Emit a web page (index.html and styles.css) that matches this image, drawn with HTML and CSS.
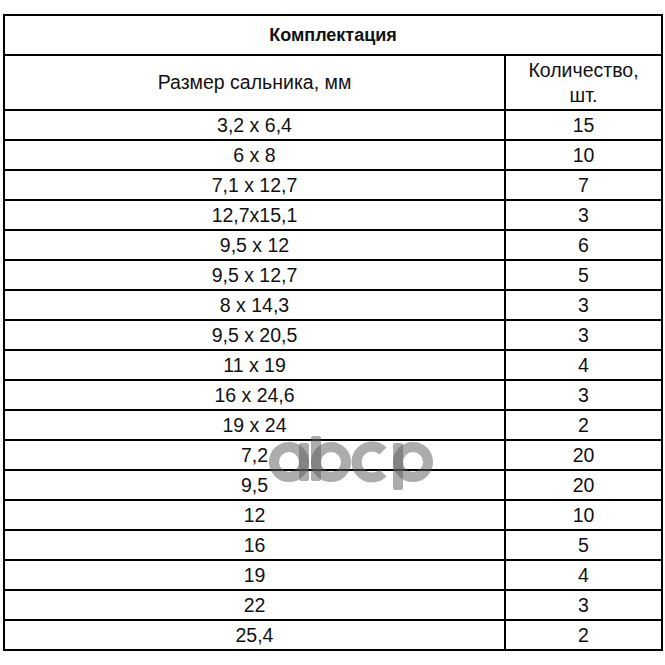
FILE: index.html
```html
<!DOCTYPE html>
<html lang="ru">
<head>
<meta charset="utf-8">
<link rel="stylesheet" href="styles.css">
</head>
<body>
<div class="sheet">
  <table class="kit">
    <colgroup><col class="c1"><col class="c2"></colgroup>
    <tr class="title"><td colspan="2">Комплектация</td></tr>
    <tr class="head"><td>Размер сальника, мм</td><td>Количество,<br>шт.</td></tr>
    <tr><td>3,2 x 6,4</td><td>15</td></tr>
    <tr><td>6 x 8</td><td>10</td></tr>
    <tr><td>7,1 x 12,7</td><td>7</td></tr>
    <tr><td>12,7x15,1</td><td>3</td></tr>
    <tr><td>9,5 x 12</td><td>6</td></tr>
    <tr><td>9,5 x 12,7</td><td>5</td></tr>
    <tr><td>8 x 14,3</td><td>3</td></tr>
    <tr><td>9,5 x 20,5</td><td>3</td></tr>
    <tr><td>11 x 19</td><td>4</td></tr>
    <tr><td>16 x 24,6</td><td>3</td></tr>
    <tr><td>19 x 24</td><td>2</td></tr>
    <tr><td>7,2</td><td>20</td></tr>
    <tr><td>9,5</td><td>20</td></tr>
    <tr><td>12</td><td>10</td></tr>
    <tr><td>16</td><td>5</td></tr>
    <tr><td>19</td><td>4</td></tr>
    <tr><td>22</td><td>3</td></tr>
    <tr><td>25,4</td><td>2</td></tr>
  </table>
  <svg class="mark" width="166" height="58" viewBox="0 0 166 58">
    <g fill="none" stroke="currentColor" stroke-width="10">
      <circle cx="21" cy="28" r="15"/>
      <circle cx="63" cy="28" r="15"/>
      <path d="M115 17 A15.5 15.5 0 1 0 115 39"/>
      <circle cx="145" cy="28" r="15"/>
    </g>
    <g fill="currentColor">
      <rect x="31" y="9" width="10" height="38" rx="2"/>
      <rect x="43" y="2" width="10" height="45" rx="2"/>
      <rect x="125" y="9" width="10" height="47" rx="2"/>
    </g>
  </svg>
</div>
</body>
</html>
```
FILE: styles.css
```css
html, body {
  margin: 0;
  padding: 0;
  background: #fff;
}
.sheet {
  position: relative;
  padding: 14px 0 0 3px;
}
.kit {
  border-collapse: collapse;
  width: 658px;
  font-family: "Liberation Sans", Arial, sans-serif;
  font-size: 19.5px;
  color: #111;
  table-layout: fixed;
}
.c1 { width: 501px; }
.c2 { width: 157px; }
.kit td {
  border: 2px solid #000;
  text-align: center;
  vertical-align: middle;
  padding: 0;
  height: 28px;
  line-height: 20px;
}
.kit .title td {
  height: 38px;
  font-weight: bold;
  font-size: 18px;
}
.kit .head td {
  height: 53px;
  line-height: 25px;
}
.mark {
  position: absolute;
  left: 268px;
  top: 434px;
  color: rgba(90, 90, 90, 0.5);
}
```
